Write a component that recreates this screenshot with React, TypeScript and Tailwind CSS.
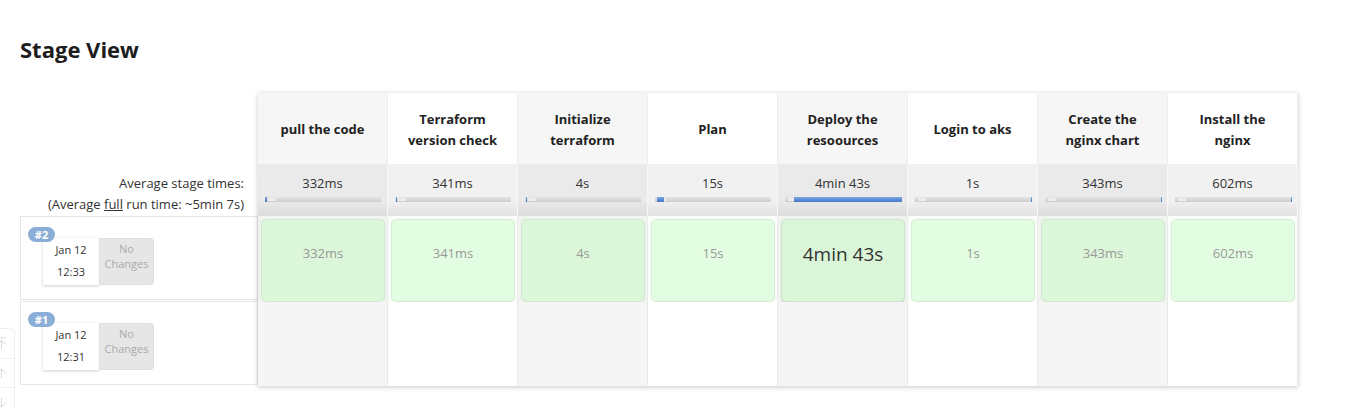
import { ArrowDown, ArrowUp, ArrowUpToLine } from "lucide-react";

interface Stage {
  name: string;
  time: string;
  barLeft: number;
  barWidth: number;
  longest?: boolean;
}

const stages: Stage[] = [
  { name: "pull the code", time: "332ms", barLeft: 0, barWidth: 2 },
  { name: "Terraform version check", time: "341ms", barLeft: 1, barWidth: 1 },
  { name: "Initialize terraform", time: "4s", barLeft: 1, barWidth: 1 },
  { name: "Plan", time: "15s", barLeft: 2, barWidth: 7 },
  { name: "Deploy the resoources", time: "4min 43s", barLeft: 9, barWidth: 108, longest: true },
  { name: "Login to aks", time: "1s", barLeft: 116, barWidth: 1 },
  { name: "Create the nginx chart", time: "343ms", barLeft: 116, barWidth: 1 },
  { name: "Install the nginx", time: "602ms", barLeft: 116, barWidth: 1 },
];

const headerWraps: Record<string, string[]> = {
  "Terraform version check": ["Terraform", "version check"],
  "Initialize terraform": ["Initialize", "terraform"],
  "Deploy the resoources": ["Deploy the", "resoources"],
  "Create the nginx chart": ["Create the", "nginx chart"],
  "Install the nginx": ["Install the", "nginx"],
};

function BuildLabel({ num, time }: { num: number; time: string }) {
  return (
    <div className="relative h-full pl-[22px] pt-[21px]">
      <span className="absolute left-[7px] top-[10px] z-10 flex h-[15px] w-[27px] items-center justify-center rounded-full bg-[#8aaed6] text-[11px] font-bold leading-none text-white">
        #{num}
      </span>
      <div className="flex h-[47px]">
        <div className="flex w-[56px] flex-col items-center pt-[3px] gap-[5px] bg-white text-[11px] leading-[17px] text-[#333] shadow-[0_1px_3px_rgba(0,0,0,0.2)]">
          <span>Jan 12</span>
          <span>{time}</span>
        </div>
        <div className="flex w-[55px] flex-col items-center pt-[2px] rounded-r-[4px] border border-[#ddd] bg-[#e6e6e6] text-[11px] leading-[15px] text-[#aaa]">
          <span>No</span>
          <span>Changes</span>
        </div>
      </div>
    </div>
  );
}

export default function App() {
  return (
    <div
      className="relative min-h-[408px] overflow-hidden bg-white text-[#333]"
      style={{ fontFamily: '"Open Sans", "Noto Sans", sans-serif' }}
    >
      <h2 className="pl-[20px] pt-[34px] text-[22px] font-bold leading-[30px] text-[#1d1d1d]">
        Stage View
      </h2>

      <div className="mt-[29px] flex pl-[20px]">
        {/* left labels */}
        <div className="w-[238px] shrink-0">
          <div className="h-[71px]" />
          <div className="flex h-[52px] flex-col items-end pr-[14px] pt-[9px] text-[13px] leading-[21px] text-[#333]">
            <span>Average stage times:</span>
            <span>
              (Average <span className="underline">full</span> run time: ~5min 7s)
            </span>
          </div>
          <div className="h-[84px] border border-[#e6e6e6]">
            <BuildLabel num={2} time="12:33" />
          </div>
          <div className="mt-px h-[84px] border border-[#e6e6e6]">
            <BuildLabel num={1} time="12:31" />
          </div>
        </div>

        {/* stage table */}
        <div className="w-[1040px] shrink-0 bg-white shadow-[0_1px_5px_rgba(0,0,0,0.22)]">
          <div className="grid h-[71px] grid-cols-8">
            {stages.map((s, i) => (
              <div
                key={s.name}
                className={`flex flex-col items-center justify-center pt-[2px] border-r border-[#ececec] text-center text-[13px] font-bold leading-[21px] text-[#222] ${
                  i % 2 === 0 ? "bg-[#f6f6f6]" : "bg-white"
                }`}
              >
                {(headerWraps[s.name] ?? [s.name]).map((line) => (
                  <span key={line}>{line}</span>
                ))}
              </div>
            ))}
          </div>

          <div className="grid h-[52px] grid-cols-8">
            {stages.map((s, i) => (
              <div
                key={s.name}
                className={`border-r border-[#f7f7f7] pt-[10px] ${
                  i % 2 === 0
                    ? "bg-linear-to-b from-[#eaeaea] from-70% to-[#dcdcdc]"
                    : "bg-linear-to-b from-[#f1f1f1] from-70% to-[#e2e2e2]"
                }`}
              >
                <div className="text-center text-[13px] leading-[18px] text-[#333]">{s.time}</div>
                <div className="relative ml-[7px] mr-[6px] mt-[5px] h-[5px] bg-linear-to-b from-[#e4e4e4] to-[#cdcdcd]">
                  <div className="absolute left-[3px] top-[1px] h-[3px] w-[8px] bg-[#ececec]" />
                  <div
                    className="absolute top-0 h-[5px] bg-linear-to-b from-[#7aa7e6] to-[#4677c9]"
                    style={{ left: s.barLeft, width: s.barWidth }}
                  />
                </div>
              </div>
            ))}
          </div>

          <div className="grid h-[85px] grid-cols-8">
            {stages.map((s, i) => (
              <div
                key={s.name}
                className={`border-r border-[#ececec] pb-px pl-[3px] pr-[2px] pt-[3px] ${
                  i % 2 === 0 ? "bg-[#f0f4ef]" : "bg-[#fafdf9]"
                }`}
              >
                <div
                  className={`flex items-center justify-center rounded-[5px] border ${
                    s.longest
                      ? "h-[83px] border-[#cfe2cd] bg-[#dbf5d9] text-[19px] text-[#333] shadow-[0_1px_1px_rgba(0,0,0,0.12)]"
                      : i % 2 === 0
                        ? "h-full border-[#d2e6d0] bg-[#dcf6da] text-[13px] text-[#999]"
                        : "h-full border-[#d6ebd4] bg-[#e3fde2] text-[13px] text-[#999]"
                  }`}
                >
                  <span className="-mt-[13px]">{s.time}</span>
                </div>
              </div>
            ))}
          </div>

          <div className="grid h-[85px] grid-cols-8 border-t border-[#ececec]">
            {stages.map((s, i) => (
              <div
                key={s.name}
                className={`border-r border-[#e9e9e9] ${i % 2 === 0 ? "bg-[#f5f5f5]" : "bg-white"}`}
              />
            ))}
          </div>
        </div>
      </div>

      {/* scroll controls at page edge */}
      <div className="absolute left-[-13px] top-[328px] flex w-[28px] flex-col rounded-md border border-[#eee] bg-white text-[#d4d4d4]">
        <div className="flex h-[30px] items-center justify-center border-b border-[#f2f2f2]">
          <ArrowUpToLine size={15} strokeWidth={1.5} />
        </div>
        <div className="flex h-[29px] items-center justify-center border-b border-[#f2f2f2]">
          <ArrowUp size={15} strokeWidth={1.5} />
        </div>
        <div className="flex h-[29px] items-center justify-center">
          <ArrowDown size={15} strokeWidth={1.5} />
        </div>
      </div>
    </div>
  );
}
